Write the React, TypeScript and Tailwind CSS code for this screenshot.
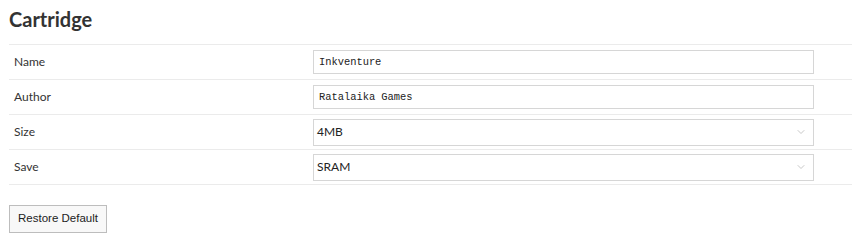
import { ChevronDown } from 'lucide-react'

const rows = [
  { label: 'Name', kind: 'text', value: 'Inkventure' },
  { label: 'Author', kind: 'text', value: 'Ratalaika Games' },
  { label: 'Size', kind: 'select', value: '4MB' },
  { label: 'Save', kind: 'select', value: 'SRAM' },
]

export default function App() {
  return (
    <div className="w-[852px] h-[245px] bg-white pl-[9px] pt-[5px] text-[#333] font-['Segoe_UI','Lato','Noto_Sans',sans-serif]">
      <h1 className="text-[20px] font-bold leading-[28px] mb-[11px] text-[#333]">Cartridge</h1>

      {/* Settings table */}
      <div className="border-t border-[#ebebeb]">
        {rows.map((row) => (
          <div key={row.label} className="flex items-center h-[35px] border-b border-[#ebebeb]">
            <div className="w-[304px] pl-[5px] text-[12px]">{row.label}</div>
            {row.kind === 'text' ? (
              <input
                readOnly
                value={row.value}
                className="w-[501px] h-[24px] border border-[#d6d6d6] px-[5px] text-[10.4px] text-[#222] font-['Liberation_Mono','Courier_New',monospace] outline-none"
              />
            ) : (
              <div className="w-[501px] h-[27px] border border-[#d6d6d6] flex items-center justify-between pl-[3px] pr-[6px] text-[12px] text-[#222]">
                <span>{row.value}</span>
                <ChevronDown size={12} strokeWidth={1.5} className="text-[#b5b5b5]" />
              </div>
            )}
          </div>
        ))}
      </div>

      <button className="mt-[20px] h-[28px] w-[98px] border border-[#bdbdbd] bg-[#f8f8f8] text-[11.5px] text-[#222] font-['Liberation_Sans',Arial,sans-serif]">
        Restore Default
      </button>
    </div>
  )
}
